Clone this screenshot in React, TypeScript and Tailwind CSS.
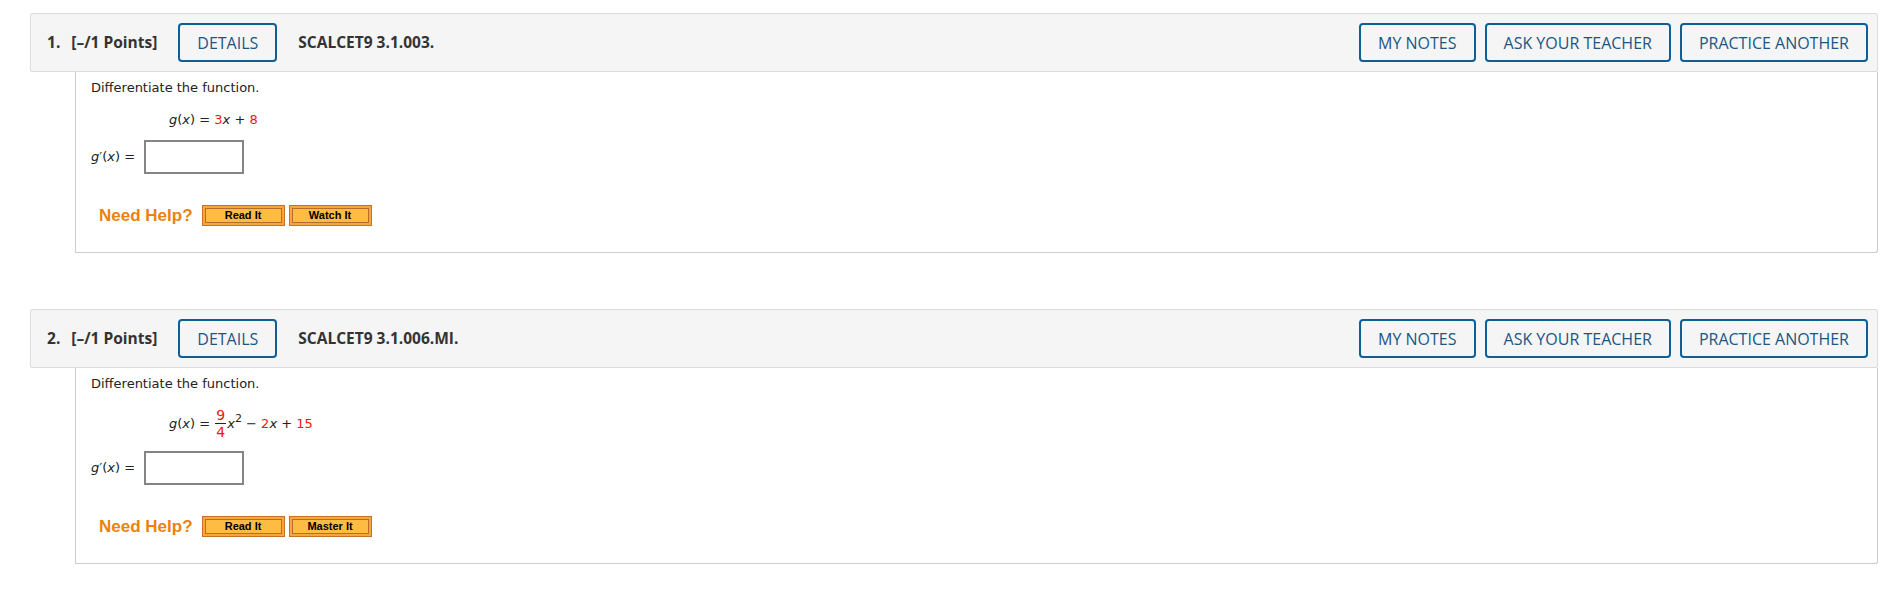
import React from "react";

/**
 * One homework question as shown on the assignment page.
 */
interface QuestionProps {
    number: number;
    code: string;
    equation: React.ReactNode;
    helpButtons: string[];
    first?: boolean;
}

const Red: React.FC<{ children: React.ReactNode }> = ({ children }) => (
    <span className="text-[#f21515]">{children}</span>
);

const HeaderButton: React.FC<{ label: string }> = ({ label }) => (
    <button className="h-[39px] px-[17px] border-2 border-[#0f5e95] rounded-[4px] text-[#1a5687] text-[16px] font-medium bg-transparent whitespace-nowrap">
        {label}
    </button>
);

const HelpButton: React.FC<{ label: string }> = ({ label }) => (
    <div className="w-[83px] h-[21px] border border-[#c2742a] bg-[#f8a53b] p-[2px]">
        <div className="h-full border border-[#b56d27] bg-[#ffbc45] flex items-center justify-center text-[11px] font-bold text-black leading-none font-['Liberation_Sans',Arial,sans-serif]">
            {label}
        </div>
    </div>
);

const Question: React.FC<QuestionProps> = ({ number, code, equation, helpButtons, first }) => (
    <div className={first ? "" : "mt-[56px]"}>
        {/* header bar */}
        <div className="h-[59px] flex items-center justify-between border border-[#dcdcdc] rounded-[2px] bg-[#f5f5f5] pl-[16px] pr-[9px] font-['Open_Sans',sans-serif] text-[#333]">
            <div className="flex items-center">
                <span className="font-bold text-[15.5px]">{number}.</span>
                <span className="font-bold text-[15.5px] ml-[11px]">[–/1 Points]</span>
                <div className="ml-[21px]">
                    <HeaderButton label="DETAILS" />
                </div>
                <span className="font-bold text-[15.5px] ml-[21px]">{code}</span>
            </div>
            <div className="flex items-center gap-[9px]">
                <HeaderButton label="MY NOTES" />
                <HeaderButton label="ASK YOUR TEACHER" />
                <HeaderButton label="PRACTICE ANOTHER" />
            </div>
        </div>

        {/* question body */}
        <div className="ml-[45px] border-l border-r border-b border-[#cccccc] rounded-br-[3px] pl-[15px] pt-[8px] pb-[26px] font-['DejaVu_Sans',Verdana,sans-serif] text-[13px] text-[#222]">
            <div className="leading-[16px]">Differentiate the function.</div>
            <div className="mt-[16px] ml-[78px] flex items-center leading-[16px]">{equation}</div>
            <div className="mt-[12px] flex items-center">
                <span>
                    <i>g</i>′(<i>x</i>) =
                </span>
                <div className="ml-[9px] w-[100px] h-[34px] border-2 border-[#858585] bg-white" />
            </div>
            <div className="mt-[31px] ml-[8px] flex items-center">
                <span className="text-[17px] leading-[21px] font-bold text-[#ea820e] font-['Liberation_Sans',Arial,sans-serif]">
                    Need Help?
                </span>
                <div className="ml-[9px] flex gap-[4px]">
                    {helpButtons.map((b) => (
                        <HelpButton key={b} label={b} />
                    ))}
                </div>
            </div>
        </div>
    </div>
);

const App: React.FC = () => {
    return (
        <div className="bg-white min-h-[603px] pt-[13px] pl-[30px] pr-[11px]">
            <Question
                first
                number={1}
                code="SCALCET9 3.1.003."
                equation={
                    <span className="whitespace-pre">
                        <i>g</i>(<i>x</i>) = <Red>3</Red><i>x</i> + <Red>8</Red>
                    </span>
                }
                helpButtons={["Read It", "Watch It"]}
            />
            <Question
                number={2}
                code="SCALCET9 3.1.006.MI."
                equation={
                    <>
                        <span className="whitespace-pre">
                            <i>g</i>(<i>x</i>) ={" "}
                        </span>
                        <span className="inline-flex flex-col items-center mx-[1px] text-[14px]">
                            <span className="text-[#f21515] leading-[14px] px-[1px] pb-[1px] border-b border-[#222]">9</span>
                            <span className="text-[#f21515] leading-[14px] pt-[1px]">4</span>
                        </span>
                        <span className="whitespace-pre">
                            <i>x</i>
                            <sup className="text-[11px] -top-[6px]">2</sup> − <Red>2</Red>
                            <i>x</i> + <Red>15</Red>
                        </span>
                    </>
                }
                helpButtons={["Read It", "Master It"]}
            />
        </div>
    );
};

export default App;
